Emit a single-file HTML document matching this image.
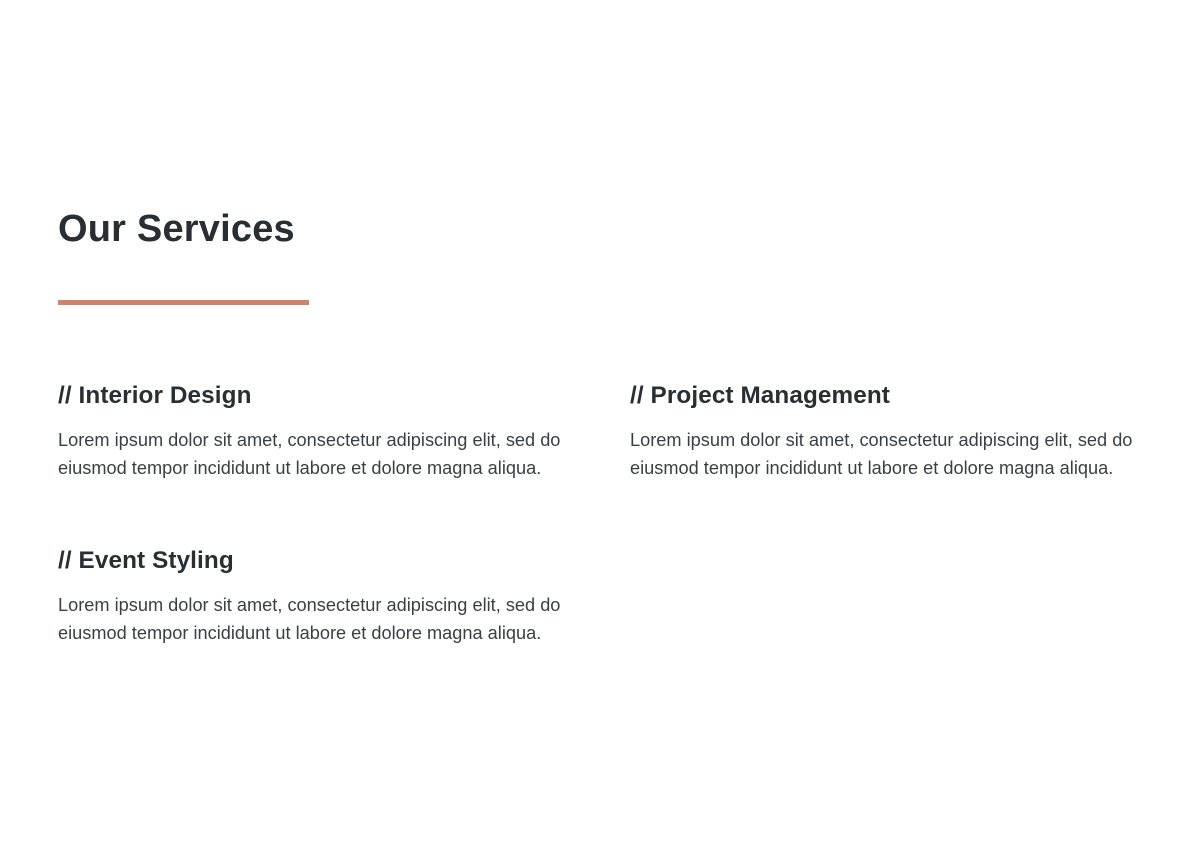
<!DOCTYPE html>
<html><head><meta charset="utf-8"><style>
html,body{margin:0;padding:0;background:#fff;width:1200px;height:843px;overflow:hidden}
body{font-family:"Liberation Sans",sans-serif;color:#292e33;position:relative}
h1{position:absolute;left:58px;top:204px;margin:0;font-size:38px;font-weight:bold;letter-spacing:0.2px;line-height:50px;color:#292e33}
.bar{position:absolute;left:58px;top:300px;width:251px;height:5px;background:#d0836a}
.svc{position:absolute;width:560px}
.svc h3{margin:0;font-size:24.3px;font-weight:bold;line-height:30px;color:#292e33;letter-spacing:0.1px}
.svc p{margin:16px 0 0;font-size:18.2px;line-height:27.5px;color:#3a3f45}
</style></head><body>
<h1>Our Services</h1>
<div class="bar"></div>
<div class="svc" style="left:58px;top:381px"><h3>// Interior Design</h3><p>Lorem ipsum dolor sit amet, consectetur adipiscing elit, sed do<br>eiusmod tempor incididunt ut labore et dolore magna aliqua.</p></div>
<div class="svc" style="left:630px;top:381px"><h3>// Project Management</h3><p>Lorem ipsum dolor sit amet, consectetur adipiscing elit, sed do<br>eiusmod tempor incididunt ut labore et dolore magna aliqua.</p></div>
<div class="svc" style="left:58px;top:546px"><h3>// Event Styling</h3><p>Lorem ipsum dolor sit amet, consectetur adipiscing elit, sed do<br>eiusmod tempor incididunt ut labore et dolore magna aliqua.</p></div>
</body></html>
